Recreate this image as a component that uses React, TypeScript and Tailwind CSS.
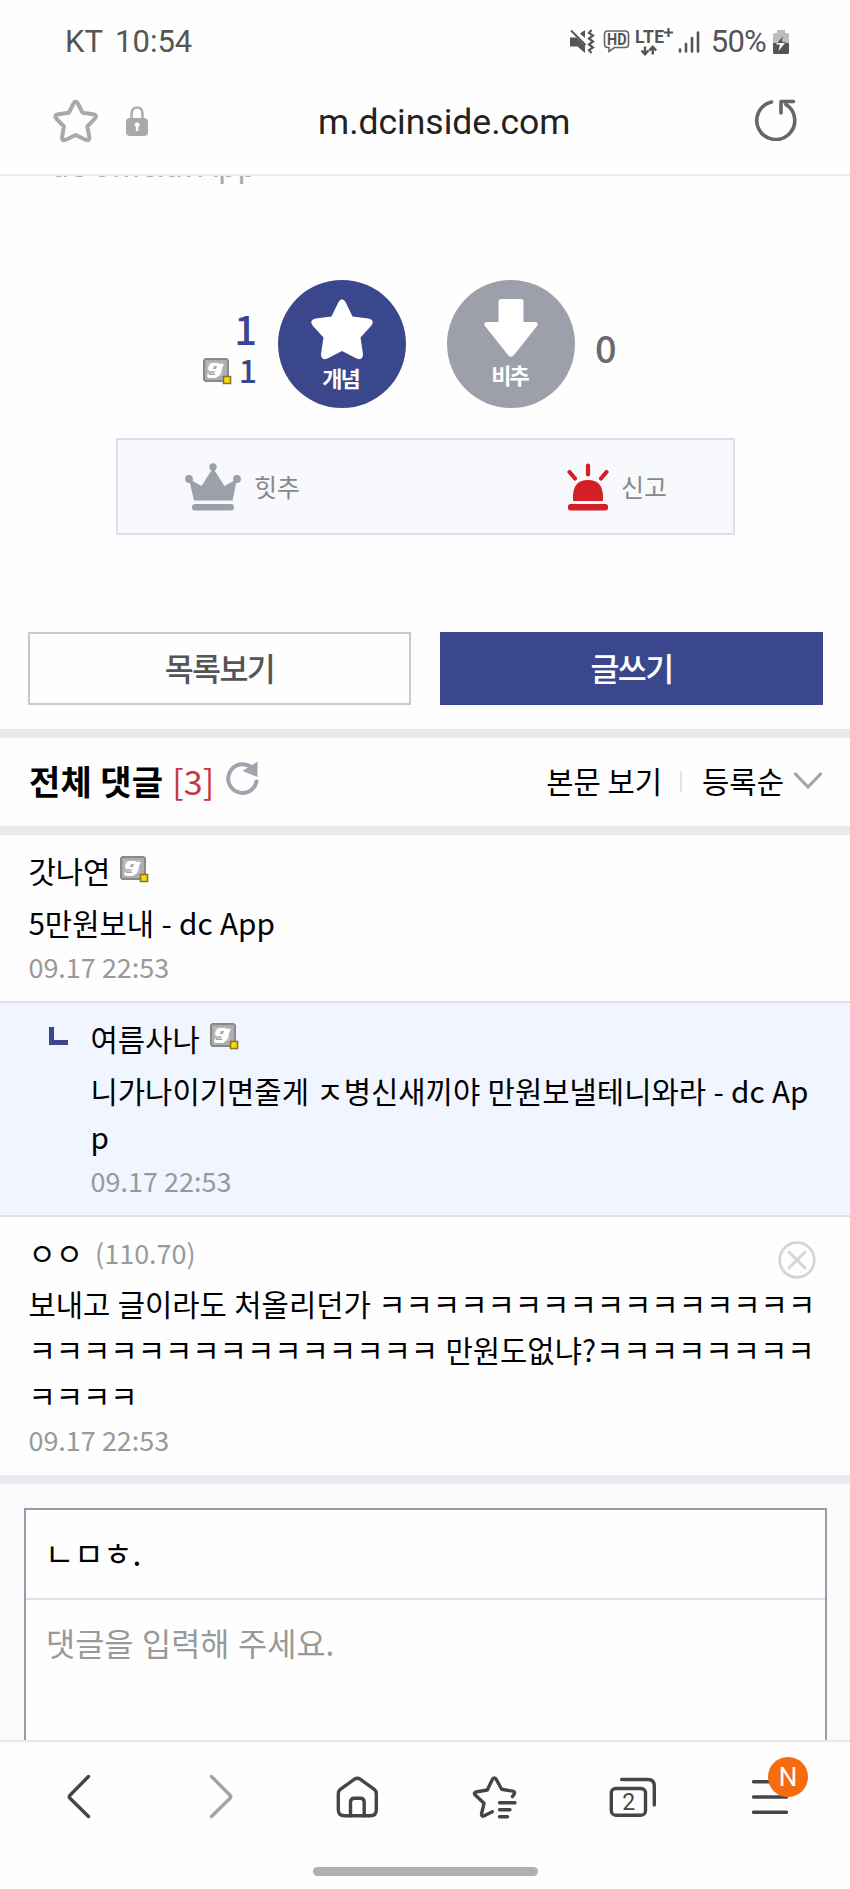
import type { ReactNode } from "react";

const dark = "#454545";

function MuteIcon() {
  return (
    <svg width="30" height="30" viewBox="0 0 30 30" fill="#555">
      <path d="M2 10.5h6.5L17 18.5V26L9.5 19.5H2ZM12 6.5 17 3v8Z" />
      <path d="M3 3.5 17.5 18" stroke="#555" strokeWidth="2" />
      <path
        d="m23.5 3-2.5 2.8 4 2.7-4 3 4 3-4 3 4 3-4 2.7L23.5 26"
        fill="none"
        stroke="#555"
        strokeWidth="2.2"
      />
    </svg>
  );
}

function HdIcon() {
  return (
    <svg width="28" height="26" viewBox="0 0 28 26">
      <path
        d="M5 2h17q3.5 0 3.5 3.5v9.5q0 3.5-3.5 3.5H11.5L6 22.5V18.5H5q-3.5 0-3.5-3.5V5.5Q1.5 2 5 2Z"
        fill="none"
        stroke="#666"
        strokeWidth="1.6"
      />
      <text x="4" y="16" textLength="19.5" lengthAdjust="spacingAndGlyphs" fontFamily="Roboto, sans-serif" fontWeight="700" fontSize="16.5" fill="#555">
        HD
      </text>
    </svg>
  );
}

function LteIcon() {
  return (
    <svg width="40" height="30" viewBox="0 0 40 30">
      <text x="0" y="15.5" textLength="29" lengthAdjust="spacing" fontFamily="Roboto, sans-serif" fontWeight="700" fontSize="17.5" fill="#555">
        LTE
      </text>
      <path d="M33.5 1v9M29 5.5h9" stroke="#555" strokeWidth="2.2" />
      <path d="M10 19.5v7M6.5 23.5 10 27.2l3.5-3.7M17.7 27.5v-7M14.2 23.5l3.5-3.7 3.5 3.7" fill="none" stroke="#555" strokeWidth="2.4" />
    </svg>
  );
}

function SignalIcon() {
  return (
    <svg width="22" height="24" viewBox="0 0 22 24" stroke="#555" strokeWidth="2.6" strokeLinecap="round">
      <path d="M2 19.5v2M8 14v7.5M14 8v13.5M20 2.5v19" />
    </svg>
  );
}

function BatteryIcon() {
  return (
    <svg width="16" height="26" viewBox="0 0 16 26">
      <path d="M4 1h8v3h2.5q1.5 0 1.5 1.5V14H0V5.5Q0 4 1.5 4H4Z" fill="#bdbdbd" />
      <path d="M0 14h16v9.5q0 1.5-1.5 1.5h-13Q0 25 0 23.5Z" fill="#555" />
      <path d="M10 7 3 15.5h4L5.5 22 13 12.8H9Z" fill="#fff" />
      <path d="M10 7 4.2 14H11.9L13 12.8H9Z" fill="#555" />
    </svg>
  );
}

// grey "g" badge shown next to registered nicknames
function NickBadge({ className = "" }: { className?: string }) {
  return (
    <svg className={className} width="29" height="27" viewBox="0 0 29 27">
      <path d="M2 0h22l2 2v20l-2 2H2l-2-2V2Z" fill="#898989" />
      <path d="M2 2h22v20H2Z" fill="#adadad" />
      <path d="M4 4h16v14H4Z" fill="#bdbdbd" />
      <path d="M9 5h6l1 1h5l-2 4-1 5-2 3-3 2H5l-1-2 1-2 6-1 1-2H6l-1-3 2-4Z" fill="#fff" />
      <path d="M11 8h3l-1 3h-3ZM6 15.5h6V17H6Z" fill="#a5a5a5" />
      <path d="M20.5 18.5h7v7h-7Z" fill="#f7dc0c" stroke="#8a7421" strokeWidth="1.6" />
    </svg>
  );
}

function CrownIcon() {
  return (
    <svg width="56" height="48" viewBox="0 0 56 48" fill="#9d9faa">
      <circle cx="28" cy="4" r="3.7" />
      <circle cx="4" cy="16" r="3.9" />
      <circle cx="52" cy="16" r="3.9" />
      <path d="M4 16 16.5 23 28 5 39.5 23 52 16 47.5 37.5H9Z" />
      <rect x="7" y="41" width="42" height="6.5" rx="3" />
    </svg>
  );
}

function SirenIcon() {
  return (
    <svg width="42" height="48" viewBox="0 0 42 48" fill="#d41f26">
      <path d="M21 2.5v9M2.5 9 8 15.5M39.5 9 34 15.5" stroke="#d41f26" strokeWidth="4.2" strokeLinecap="round" />
      <path d="M6 38V32q1-15 15-15t15 15v6Z" />
      <rect x="1" y="41" width="40" height="6.5" rx="2.5" />
    </svg>
  );
}

function VoteButton({ label, className, children }: { label: string; className: string; children: ReactNode }) {
  return (
    <button className={`flex h-32 w-32 flex-col items-center rounded-full text-[22px] leading-[30px] font-bold tracking-[-2px] text-white ${className}`}>
      {children}
      <span className="mr-[2px]">{label}</span>
    </button>
  );
}

type CommentProps = {
  name: string;
  ip?: string;
  lines: string[];
  date: string;
  reply?: boolean;
};

function Comment({ name, ip, lines, date, reply = false }: CommentProps) {
  return (
    <li className={reply ? "flex border-y-2 border-[#dfe0e9] bg-[#f1f5ff] pl-[49px]" : "flex pl-[28.4px]"}>
      {reply && <span className="mt-6 mr-[22.5px] h-[18px] w-[19px] border-b-[5px] border-l-[5px] border-[#3b478d]" />}
      <div className="flex-1 pt-[13px] pb-[14.2px] whitespace-nowrap">
        <div className="flex h-[46px] items-center">
          <span className="text-[29.7px] leading-[46px]">{name}</span>
          {ip ? (
            <span className="ml-[12px] text-[27px] leading-[46px] text-[#999]">({ip})</span>
          ) : (
            <NickBadge className="-mt-[4px] ml-[10px]" />
          )}
          {ip && (
            <svg className="mt-[14px] mr-[34px] ml-auto" width="38" height="38" viewBox="0 0 38 38" fill="none" stroke="#d5d5d5" strokeWidth="2.8">
              <circle cx="19" cy="19" r="17.3" />
              <path d="m11 11 16 16M27 11 11 27" strokeWidth="3" strokeLinecap="round" />
            </svg>
          )}
        </div>
        <p className="mt-[5.7px] text-[29.7px] leading-[46px] [word-spacing:0.7px]">
          {lines.map((line) => (
            <span key={line} className="block">
              {line}
            </span>
          ))}
        </p>
        <div className="mt-[1px] text-[27px] leading-[40px] text-[#999]">{date}</div>
      </div>
    </li>
  );
}

function NavIcon({ stroke = dark, children }: { stroke?: string; children: ReactNode }) {
  return (
    <button className="relative flex w-[138px] justify-center">
      <svg width="60" height="60" viewBox="0 0 60 60" fill="none" stroke={stroke} strokeWidth="3.4" strokeLinecap="round" strokeLinejoin="round">
        {children}
      </svg>
    </button>
  );
}

const comments: CommentProps[] = [
  { name: "갓나연", lines: ["5만원보내 - dc App"], date: "09.17 22:53" },
  {
    name: "여름사나",
    lines: ["니가나이기면줄게 ㅈ병신새끼야 만원보낼테니와라 - dc Ap", "p"],
    date: "09.17 22:53",
    reply: true,
  },
  {
    name: "ㅇㅇ",
    ip: "110.70",
    lines: [
      "보내고 글이라도 처올리던가 ㅋㅋㅋㅋㅋㅋㅋㅋㅋㅋㅋㅋㅋㅋㅋㅋ",
      "ㅋㅋㅋㅋㅋㅋㅋㅋㅋㅋㅋㅋㅋㅋㅋ 만원도없냐?ㅋㅋㅋㅋㅋㅋㅋㅋ",
      "ㅋㅋㅋㅋ",
    ],
    date: "09.17 22:53",
  },
];

export default function App() {
  return (
    <div className="flex h-[1889px] w-[850px] flex-col overflow-hidden bg-[#fefefe] font-['Noto_Sans_CJK_KR',sans-serif] text-black">
      {/* status bar */}
      <div className="flex h-[84px] shrink-0 items-center pl-[65px] font-[Roboto,sans-serif] text-[31px] text-[#555]">
        <span className="[word-spacing:5px]">KT 10:54</span>
        <div className="mr-[61px] ml-auto flex items-center">
          <MuteIcon />
          <div className="ml-[5px]">
            <HdIcon />
          </div>
          <div className="ml-[4px]">
            <LteIcon />
          </div>
          <div className="ml-[3px]">
            <SignalIcon />
          </div>
          <span className="ml-[11px] tracking-[-0.8px]">50%</span>
          <div className="ml-[7px]">
            <BatteryIcon />
          </div>
        </div>
      </div>

      {/* address bar */}
      <header className="flex h-[92px] shrink-0 items-center border-b-2 border-[#ededed] pr-[53px] pb-[17px] pl-[52px]">
        <svg width="48" height="48" viewBox="0 0 48 48" fill="none" stroke="#a9a9a9" strokeWidth="4" strokeLinejoin="round">
          <path d="M21.5 6.5Q23.7 2.5 25.9 6.5L30.5 15.7 41 17.3Q46 18.3 42.5 22L35.3 29.5 37.3 40Q37.7 44.5 33.5 42.7L23.7 38 13.9 42.7Q9.7 44.5 10.1 40L11.9 29.5 4.7 22Q1.3 18.3 6.3 17.3L16.9 15.7Z" />
        </svg>
        <svg className="ml-[26px]" width="22" height="30" viewBox="0 0 22 30">
          <path d="M5.5 13V8.5q0-7 5.5-7t5.5 7V13" fill="none" stroke="#b0b0b0" strokeWidth="2.6" />
          <rect y="12" width="22" height="18" rx="4" fill="#a9a9a9" />
          <path d="M11 16.5a2.2 2.2 0 0 1 1.3 4.2V25H9.9v-4.3A2.2 2.2 0 0 1 11 16.5Z" fill="#fff" />
        </svg>
        <span className="mt-[2px] ml-[170px] font-[Roboto,sans-serif] text-[35.5px] leading-[40px] text-[#222]">m.dcinside.com</span>
        <svg className="-mt-[4px] ml-auto" width="44" height="44" viewBox="0 0 44 44" fill="none" stroke="#666" strokeWidth="3.6" strokeLinecap="round" strokeLinejoin="round">
          <path d="M18.5 5A19 19 0 1 0 33 7.5M28 16V4.5H40.5" />
        </svg>
      </header>

      <main className="flex min-h-0 flex-1 flex-col overflow-hidden">
        {/* end of the post, scrolled under the address bar */}
        <div className="-mt-[32px] h-[44px] shrink-0 pl-[50px] text-[31.4px] leading-[40px] text-[#aaa]">dc official App</div>

        <section className="mt-[92px] flex h-32 shrink-0 items-start">
          <div className="w-[257px] text-right font-medium text-[#3b478d]">
            <div className="mt-[28px] text-[40px] leading-[41px]">1</div>
            <div className="flex items-center justify-end text-[32px] leading-[40px]">
              <NickBadge className="mt-[4px] mr-[7px]" />1
            </div>
          </div>
          <VoteButton label="개념" className="ml-[20.5px] bg-[#3b478d] pt-[18px]">
            <svg width="64" height="64" viewBox="0 0 64 64" fill="#fff">
              <path d="M28.5 4Q32 -1.5 35.5 4L42.5 18.5 58.5 20.5Q65.5 22.5 61 28L50.5 39.5 53 56Q53 63 46.5 60.5L32 53 17.5 60.5Q11 63 11 56L13.5 39.5 3 28Q-1.5 22.5 5.5 20.5L21.5 18.5Z" />
            </svg>
          </VoteButton>
          <VoteButton label="비추" className="ml-[41px] bg-[#9d9faa] pt-[18px]">
            <svg className="-mb-[1px]" width="56" height="62" viewBox="0 0 56 62" fill="#fff">
              <path d="M18 1h20q2.5 0 2.5 2.5V24H52q4 0 2 4L31 57q-3 3.5-6 0L2 28q-2-4 2-4h11.5V3.5Q15.5 1 18 1Z" />
            </svg>
          </VoteButton>
          <span className="mt-[47px] ml-[20.5px] text-[38px] leading-[40px] font-medium text-[#696a70]">0</span>
        </section>

        <section className="mt-[30px] ml-[116px] flex h-[97px] w-[619px] shrink-0 items-center border-2 border-[#dcdeeb] bg-[#f8f9fd] text-[25px] text-[#888]">
          <div className="mt-[1px] flex items-center pl-[67px]">
            <CrownIcon />
            <span className="ml-[13px]">힛추</span>
          </div>
          <div className="mt-[1px] mr-[66px] ml-auto flex items-center">
            <SirenIcon />
            <span className="ml-[12px]">신고</span>
          </div>
        </section>

        <div className="mt-[97px] flex h-[73px] shrink-0 gap-[29px] pl-[28px] text-[31.5px] font-medium tracking-[-1.6px]">
          <button className="w-[383px] border-2 border-[#c8c8d2] pb-[2px] text-[#555]">목록보기</button>
          <button className="w-[383px] bg-[#3b478d] pb-[2px] text-white">글쓰기</button>
        </div>

        {/* comment list header */}
        <div className="mt-6 flex h-[106px] shrink-0 items-center border-y-[9px] border-[#e9eaef] pr-[27px] pb-[2px] pl-[29px]">
          <h2 className="-mt-[1px] text-[34px] font-bold tracking-[0.3px]">전체 댓글</h2>
          <span className="-mt-[1px] ml-[9px] text-[34px] text-[#c7373c]">[3]</span>
          <svg className="-mt-[6px] ml-[12px]" width="34" height="36" viewBox="0 0 34 36">
            <path d="M30.5 21.5A14.3 14.3 0 1 1 25.5 7.5" fill="none" stroke="#a2a4ad" strokeWidth="4" strokeLinecap="round" />
            <path d="M31.5 1.500V17L16.5 11Z" fill="#a2a4ad" />
          </svg>
          <span className="ml-auto text-[29.7px]">본문 보기</span>
          <span className="mr-[20px] ml-[18px] h-[21px] w-[2px] bg-[#e2e2ea]" />
          <span className="text-[29.7px]">등록순</span>
          <svg className="ml-[9px]" width="30" height="20" viewBox="0 0 30 20" fill="none" stroke="#a2a4ad" strokeWidth="3.2" strokeLinecap="round">
            <path d="m2.5 3 12.5 13L27.5 3" />
          </svg>
        </div>

        <ul className="shrink-0">
          {comments.map((comment) => (
            <Comment key={comment.name} {...comment} />
          ))}
        </ul>

        {/* comment form, cut off by the toolbar */}
        <div className="flex min-h-0 flex-1 flex-col border-t-[9px] border-[#e9eaef] bg-[#f9fafc] pt-6 pr-[23px] pl-6">
          <div className="flex-1 border-2 border-b-0 border-[#999ba4] bg-[#fefefe] text-[31.7px]">
            <div className="flex h-[90px] items-center border-b-2 border-[#dfe0ec] pb-[2px] pl-[19px]">ㄴㅁㅎ.</div>
            <div className="pt-[19px] pl-[20px] leading-[46px] text-[#999] [word-spacing:1.5px]">댓글을 입력해 주세요.</div>
          </div>
        </div>
      </main>

      {/* browser toolbar */}
      <nav className="h-[149px] shrink-0 border-t-2 border-[#e6e7ea] pt-[25px]">
        <div className="flex pl-[10px]">
          <NavIcon>
            <path d="M39.5 9.5 21 28.2q-1.5 1.5 0 3L39.5 49.5" />
          </NavIcon>
          <NavIcon stroke="#a3a3a3">
            <path d="M24.5 9.5 43 28.2q1.5 1.5 0 3L24.5 49.5" />
          </NavIcon>
          <NavIcon>
            <path d="M13.3 27q0-3 2-4.7L29.5 12.2q2.8-2 5.6 0L49.3 22.3q2 1.7 2 4.7V42.8q0 6-6 6h-26q-6 0-6-6Z" />
            <path d="M25.5 48.8V35.2q0-4 4-4h5.7q4 0 4 4v13.6" />
          </NavIcon>
          <NavIcon>
            <path d="M49.5 29.5 51.2 27q1.2-2.3-1.5-2.8L38.7 22.3 33 12q-1.7-2.3-3.4 0L24.3 23 12.8 25q-2.2.8-.8 2.7L21 36.3 18.5 47q0 3 2.8 1.7L29.3 44.7" />
            <path d="M36.5 35.7H52M36.5 42.7H47M36.5 49.7H44.5" />
          </NavIcon>
          <NavIcon>
            <rect x="10.3" y="21.5" width="34.2" height="26.7" rx="4.5" />
            <path d="M20.7 12.5H46.8q6.5 0 6.5 6.5V38" />
            <text x="27.6" y="42.5" textAnchor="middle" fontFamily="Roboto, sans-serif" fontSize="23" fill={dark} stroke="none">
              2
            </text>
          </NavIcon>
          <div className="relative">
            <NavIcon>
              <path d="M14.5 14.7H47.5M14.5 30H47.5M14.5 45.2H47.5" />
            </NavIcon>
            <span className="absolute -top-[10px] left-[68px] flex h-10 w-10 items-center justify-center rounded-full bg-[#f56b0e] font-[Roboto,sans-serif] text-[26px] text-white">
              N
            </span>
          </div>
        </div>
        <div className="mx-auto mt-[40px] h-[9px] w-[225px] rounded-full bg-[#b0b0b0]" />
      </nav>
    </div>
  );
}
